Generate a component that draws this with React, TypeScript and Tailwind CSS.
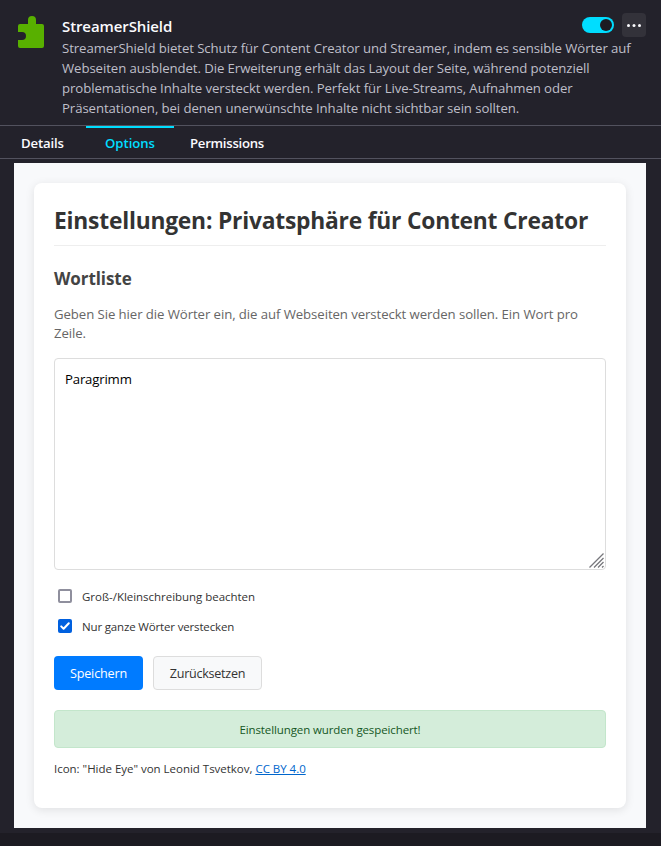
import React from "react";

const description = [
  "StreamerShield bietet Schutz für Content Creator und Streamer, indem es sensible Wörter auf",
  "Webseiten ausblendet. Die Erweiterung erhält das Layout der Seite, während potenziell",
  "problematische Inhalte versteckt werden. Perfekt für Live-Streams, Aufnahmen oder",
  "Präsentationen, bei denen unerwünschte Inhalte nicht sichtbar sein sollten.",
];

function Header() {
  return (
    <header className="flex h-[125px] pl-4 pt-4">
      <svg width="30" height="32" viewBox="0 0 30 32" className="shrink-0" aria-hidden="true">
        <path
          fill="#58b000"
          d="M4 8h8V4a4 4 0 0 1 8 0v4h6a2 2 0 0 1 2 2v20a2 2 0 0 1-2 2H4a2 2 0 0 1-2-2v-6h4a4 4 0 0 0 0-8H2v-6a2 2 0 0 1 2-2z"
        />
      </svg>
      <div className="ml-4 flex-1">
        <div className="flex h-[22px] justify-between">
          <h1 className="text-[15px] font-semibold leading-[20px] tracking-[-0.1px] text-[#fbfbfe]">StreamerShield</h1>
          <div className="-mt-[3px] mr-[15px] flex h-6 items-center gap-2">
            <span className="flex h-4 w-8 items-center justify-end rounded-full bg-[#00ddff] pr-0.5">
              <span className="h-3 w-3 rounded-full bg-[#1c1b22]" />
            </span>
            <button className="flex h-6 w-6 items-center justify-center rounded bg-[#33323a]" aria-label="More">
              <svg width="16" height="16" viewBox="0 0 16 16" fill="#fbfbfe" aria-hidden="true">
                <circle cx="2.5" cy="8.5" r="1.5" />
                <circle cx="8" cy="8.5" r="1.5" />
                <circle cx="13.5" cy="8.5" r="1.5" />
              </svg>
            </button>
          </div>
        </div>
        <div className="text-[13.2px] leading-5 tracking-[-0.08px] text-[#bfbfc9]">
          {description.map((line) => (
            <p key={line} className="whitespace-nowrap">{line}</p>
          ))}
        </div>
      </div>
    </header>
  );
}

function Tabs() {
  return (
    <nav className="flex h-[34px] border-y border-[#52525e] text-[13.2px] font-semibold leading-[34px] text-[#fbfbfe]">
      <span className="w-[86px] pl-[21px] tracking-[-0.15px]">Details</span>
      <span className="w-[88px] border-t-2 border-[#00ddff] pl-[19px] leading-[30px] tracking-[-0.05px] text-[#00ddff]">Options</span>
      <span className="pl-4 tracking-[-0.28px]">Permissions</span>
    </nav>
  );
}

function Check({ label, checked, tracking }: { label: string; checked: boolean; tracking: string }) {
  return (
    <label className="flex h-[30px] items-center pl-1">
      {checked ? (
        <span className="flex h-3.5 w-3.5 items-center justify-center rounded-[2px] bg-[#0060df]">
          <svg width="14" height="14" viewBox="0 0 14 14" fill="none" aria-hidden="true">
            <path d="M3.2 7.4l2.4 2.4 5.2-5.6" stroke="#fff" strokeWidth="2" strokeLinecap="round" strokeLinejoin="round" />
          </svg>
        </span>
      ) : (
        <span className="h-3.5 w-3.5 rounded-[2px] border-2 border-[#8f8f9d] bg-white" />
      )}
      <span className={`ml-2.5 pt-px text-[11.5px] ${tracking}`}>{label}</span>
    </label>
  );
}

export default function App() {
  return (
    <div className="flex h-[846px] w-[661px] flex-col overflow-hidden bg-[#1c1b22] font-['Open_Sans','Noto_Sans',sans-serif]">
      <div className="h-[833px] bg-[#23222b]">
        <Header />
        <Tabs />
        <div className="ml-3.5 mt-1 h-[665px] w-[632px] bg-[#f8f9fb] p-5 text-[#333333]">
          <main className="h-[625px] rounded-lg bg-white px-5 pt-5 shadow-[0_2px_10px_rgba(0,0,0,0.1)]">
            <h2 className="h-[43px] whitespace-nowrap border-b border-[#eeeeee] text-[22.8px] font-bold leading-[36px] tracking-[-0.21px]">
              Einstellungen: Privatsphäre für Content Creator
            </h2>
            <h3 className="mt-5 text-[17px] font-bold leading-[26px] tracking-[-0.08px] text-[#444444]">Wortliste</h3>
            <div className="mt-[13px] whitespace-nowrap text-[13.2px] leading-[19px] tracking-[-0.08px] text-[#666666]">
              <p>Geben Sie hier die Wörter ein, die auf Webseiten versteckt werden sollen. Ein Wort pro</p>
              <p>Zeile.</p>
            </div>
            <div className="relative mt-[15px] h-[212px] rounded border border-[#dddddd] px-2.5 pt-[11px] text-[13.2px] leading-[19px] tracking-[-0.18px] text-black">
              Paragrimm
              <svg className="absolute bottom-px right-px" width="15" height="15" viewBox="0 0 15 15" aria-hidden="true">
                <path d="M.5 14.5l14-14M5 14.5l9.5-9.5M9 14.5l5.5-5.5M13 14.5l1.5-1.5" stroke="#77777c" strokeWidth="1.3" />
              </svg>
            </div>
            <div className="mt-[11px]">
              <Check label="Groß-/Kleinschreibung beachten" checked={false} tracking="tracking-[-0.03px]" />
              <Check label="Nur ganze Wörter verstecken" checked tracking="tracking-[-0.16px]" />
            </div>
            <div className="mt-[15px] flex gap-2.5 text-[12.6px]">
              <button className="h-[34px] w-[89px] rounded bg-[#007bff] pt-0.5 tracking-[-0.15px] text-white">Speichern</button>
              <button className="h-[34px] w-[109px] rounded border border-[#dddddd] bg-[#f8f9fa] pt-0.5 tracking-[-0.28px]">Zurücksetzen</button>
            </div>
            <div className="mt-5 flex h-[38px] items-center justify-center rounded border border-[#c3e6cb] bg-[#d4edda] pt-0.5 text-[11.5px] tracking-[-0.11px] text-[#155724]">
              Einstellungen wurden gespeichert!
            </div>
            <p className="mt-3 text-[11.5px] leading-[18px] tracking-[-0.02px]">
              Icon: "Hide Eye" von Leonid Tsvetkov, <a className="text-[#0066cc] underline">CC BY 4.0</a>
            </p>
          </main>
        </div>
      </div>
    </div>
  );
}
